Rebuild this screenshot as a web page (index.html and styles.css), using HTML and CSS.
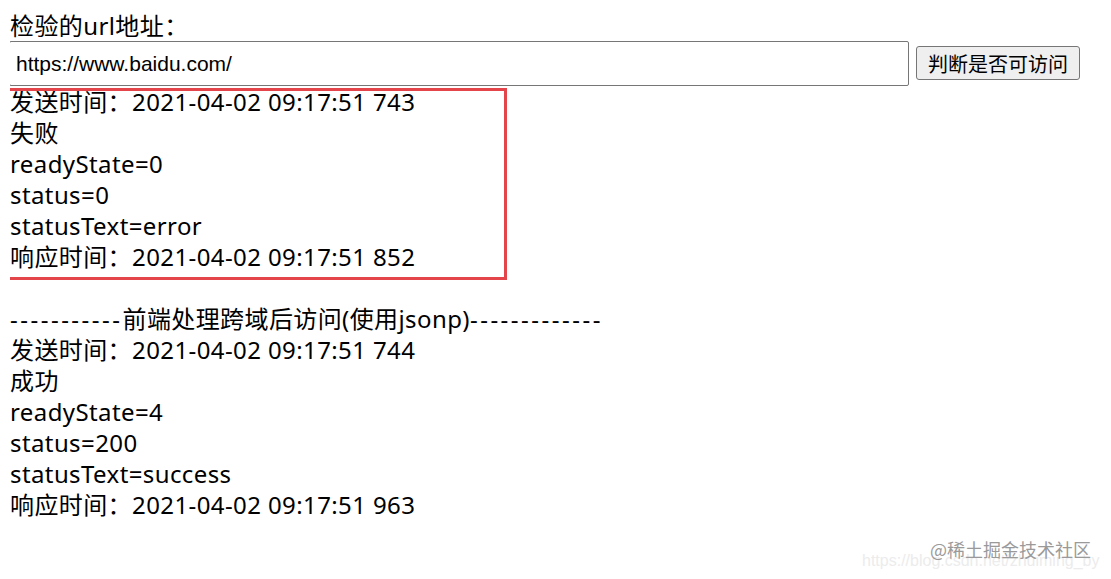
FILE: index.html
```html
<!DOCTYPE html>
<html lang="zh-CN">
<head>
<meta charset="utf-8">
<title>检验url</title>
<link rel="stylesheet" href="styles.css">
</head>
<body>
<div class="label">检验的url地址：</div>
<div class="row">
  <input class="url" type="text" value="https://www.baidu.com/">
  <button class="btn" type="button">判断是否可访问</button>
</div>
<div class="result marked">
  <div>发送时间：2021-04-02 09:17:51 743</div>
  <div>失败</div>
  <div>readyState=0</div>
  <div>status=0</div>
  <div>statusText=error</div>
  <div>响应时间：2021-04-02 09:17:51 852</div>
  <span class="mark"></span>
</div>
<div class="result">
  <div>&nbsp;</div>
  <div><span class="dash">-----------</span>前端处理跨域后访问(使用jsonp)<span class="dash">-------------</span></div>
  <div>发送时间：2021-04-02 09:17:51 744</div>
  <div>成功</div>
  <div>readyState=4</div>
  <div>status=200</div>
  <div>statusText=success</div>
  <div>响应时间：2021-04-02 09:17:51 963</div>
</div>
<div class="wm-url">https://blog.csdn.net/zhuiming_by</div>
<div class="wm">@稀土掘金技术社区</div>
</body>
</html>
```
FILE: styles.css
```css
html, body {
  background: #fff;
}
body {
  margin: 10px;
  font-family: "Noto Sans", "Noto Sans CJK SC", sans-serif;
  font-size: 24px;
  line-height: 31px;
  letter-spacing: 0.4px;
  color: #000;
}
.label {
  height: 31px;
}
.row {
  display: flex;
  align-items: center;
  gap: 8px;
  height: 45px;
  letter-spacing: 0;
}
.url {
  box-sizing: border-box;
  width: 900px;
  height: 45px;
  margin: 0 0 0 -1px;
  padding: 0 6px;
  border: 1px solid #767676;
  border-radius: 2px;
  font-family: "Liberation Sans", "Noto Sans CJK SC", sans-serif;
  font-size: 21px;
  color: #000;
  background: #fff;
}
.btn {
  box-sizing: border-box;
  width: 164px;
  height: 34px;
  margin: 0 0 1px -1px;
  padding: 0;
  border: 1px solid #767676;
  border-radius: 3px;
  background: #efefef;
  font-family: "Noto Sans CJK SC", sans-serif;
  font-size: 20px;
  color: #000;
}
.result {
  margin-top: 0;
}
.result.marked {
  position: relative;
}
.dash {
  letter-spacing: 2.5px;
}
.mark {
  position: absolute;
  left: -7px;
  top: 2px;
  width: 498px;
  height: 186px;
  border: 3px solid #e4454a;
}
.wm {
  position: absolute;
  left: 930px;
  top: 537px;
  font-family: "Noto Sans CJK SC", sans-serif;
  font-size: 18px;
  line-height: 24px;
  letter-spacing: 0;
  color: #9a9a9a;
}
.wm-url {
  position: absolute;
  left: 862px;
  top: 551px;
  font-family: "Liberation Sans", sans-serif;
  font-size: 16px;
  line-height: 20px;
  letter-spacing: 0;
  color: #ececec;
}
```
